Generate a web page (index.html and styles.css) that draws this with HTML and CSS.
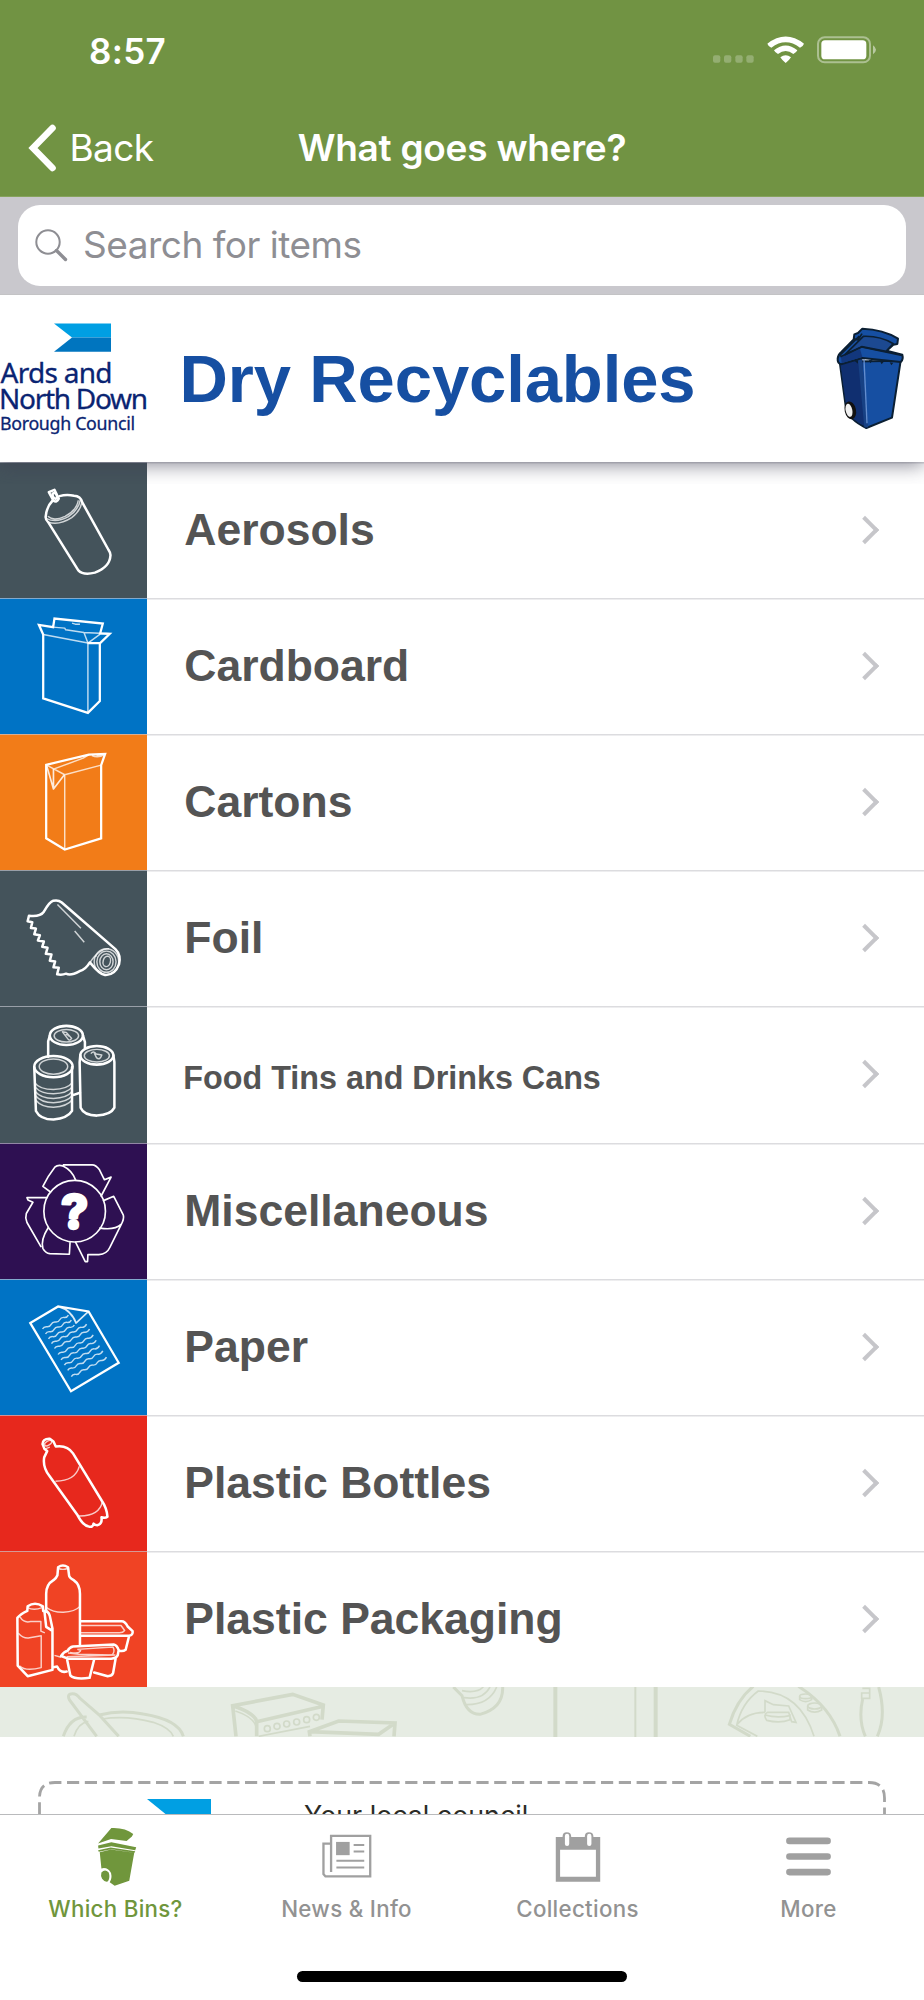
FILE: index.html
```html
<!DOCTYPE html>
<html lang="en">
<head>
<meta charset="utf-8">
<title>What goes where?</title>
<link rel="stylesheet" href="styles.css">
</head>
<body>
<div class="screen">
  <header class="top">
    <div class="status">
      <span class="time">8:57</span>
      <svg class="status-icons" width="164" height="28" viewBox="0 0 492 84">
        <g fill="#fff" fill-opacity=".25"><rect x="0" y="58" width="22" height="22" rx="6"/><rect x="33" y="58" width="22" height="22" rx="6"/><rect x="67" y="58" width="22" height="22" rx="6"/><rect x="100" y="58" width="22" height="22" rx="6"/></g>
        <path fill="#fff" d="M163 23Q218-20 273 23Q271 30 261 35Q218 3 175 35Q165 30 163 23ZM183 43Q218 14 253 43Q250 50 241 54Q218 36 195 54Q186 50 183 43ZM202 64Q218 51 234 64Q228 74 218 81Q208 74 202 64Z"/>
        <rect x="315" y="4" width="156" height="75" rx="20" fill="none" stroke="#fff" stroke-opacity=".42" stroke-width="6"/>
        <rect x="325" y="13" width="135" height="57" rx="11" fill="#fff"/>
        <path d="M480 28Q498 41 480 55Z" fill="#fff" fill-opacity=".5"/>
      </svg>
    </div>
    <nav class="nav">
      <svg class="nav-arrow" width="30" height="50" viewBox="0 0 30 50"><path d="M25.5 5L6 25L25.5 45" fill="none" stroke="#fff" stroke-width="6.6" stroke-linecap="round" stroke-linejoin="miter"/></svg>
      <span class="back">Back</span>
      <h1 class="title">What goes where?</h1>
    </nav>
  </header>

  <div class="searchbar">
    <div class="field">
      <svg width="34" height="34" viewBox="0 0 34 34" fill="none" stroke="#8e8e93"><circle cx="14" cy="14" r="11.7" stroke-width="2"/><path d="M22.5 22.5L31.5 31.5" stroke-width="3.4" stroke-linecap="round"/></svg>
      <span class="placeholder">Search for items</span>
    </div>
  </div>

  <section class="category">
    <svg class="council" width="148" height="167" viewBox="0 295 148 167">
      <path d="M54 323.5H111V337.5H72Z" fill="#009fe3"/><path d="M72 337.5H111V351.7H54Z" fill="#0075bf"/>
      <g class="council-name"><text x="0.5" y="382.7" font-size="28" textLength="112">Ards and</text><text x="-1" y="409" font-size="28" textLength="149">North Down</text><text x="0" y="429.5" font-size="17.8" textLength="135">Borough Council</text></g>
    </svg>
    <h2 class="category-title">Dry Recyclables</h2>
    <svg class="bin" width="70" height="106" viewBox="405 78 210 318" stroke-linejoin="round">
      <path d="M419 185L438 325Q446 358 499 384L576 353L602 182Z" fill="#164fa2" stroke="#0b1f33" stroke-width="6"/>
      <path d="M421 190L487 176L499 381Q451 359 440 328Z" fill="#102f70"/>
      <path d="M480 178L499 382" stroke="#174184" stroke-width="12"/>
      <path d="M492 178L501 370" stroke="#638dce" stroke-width="4"/>
      <path d="M413 176Q414 164 424 156L461 118L463 103L474 99L487 86Q550 88 594 116L592 132L580 134L560 152L607 164Q611 178 602 186L487 174L423 193Q412 190 413 176Z" fill="#164fa2" stroke="#0b1f33" stroke-width="6"/>
      <path d="M423 170L480 147L487 171L425 190Z" fill="#12377d"/>
      <path d="M490 109Q540 107 580 131L558 154L485 140L435 164Z" fill="#1c4991" stroke="#0b1f33" stroke-width="5"/>
      <path d="M421 170L485 141L606 166M461 116L474 120L486 101M419 166L478 108" fill="none" stroke="#0b1f33" stroke-width="5"/>
      <path d="M464 183l10 8v-10zM507 180l4 10 7-9zM540 184l5 9 6-8zM569 187l5 9 6-8z" fill="#0b1f33"/>
      <ellipse cx="451" cy="331" rx="17" ry="27" transform="rotate(-12 451 331)" fill="#111"/><ellipse cx="447" cy="331" rx="10" ry="20" transform="rotate(-12 447 331)" fill="#f0f0f0"/>
    </svg>
  </section>

  <ul class="list">
    <li class="row"><div class="tile slate">
      <svg viewBox="0 486 441 408"><g class="ln"><path d="M146 574L163 567L176 594Q170 606 160 600Z"/><ellipse cx="164" cy="585" rx="6" ry="9" transform="rotate(-25 164 585)"/><path d="M157 600Q140 617 137 645Q134 656 145 666L235 810Q250 826 285 817Q330 800 332 766Q333 758 326 748L247 605Q242 586 222 585Q200 580 178 586"/></g><g class="th"><path d="M143 647Q160 663 195 647Q230 629 235 599M139 654Q169 668 205 648Q236 628 241 598M145 665Q178 675 215 651Q240 632 245 607"/></g></svg>
    </div><span class="label">Aerosols</span><i class="chev"></i></li>
    <li class="row"><div class="tile blue">
      <svg viewBox="0 23 441 408"><g class="ln miter"><path d="M129 130L116 101L159 108L163 82L309 97L301 127L330 128L301 156L265 156M129 130V323L264 367L300 331V156"/></g><g class="th"><path d="M129 130L264 156V366M159 108L194 111L197 116L252 124L330 128M252 124L264 156L301 129M216 96L226 99H240"/></g></svg>
    </div><span class="label">Cardboard</span><i class="chev"></i></li>
    <li class="row"><div class="tile orange">
      <svg viewBox="0 432 441 408"><g class="ln miter"><path d="M138 522L267 491L316 489L304 523V744L194 778L138 744Z"/></g><g class="th"><path d="M138 522L194 552L304 523M194 552V778M160 535L250 502L267 491M276 494Q295 502 314 491M290 493H308"/><path class="mid" d="M140 526L160 595L193 552M160 535V592"/></g></svg>
    </div><span class="label">Cartons</span><i class="chev"></i></li>
    <li class="row"><div class="tile slate">
      <svg viewBox="0 2 441 408"><g class="ln"><path d="M86 137Q120 141 131 125Q148 95 159 92Q174 88 185 97L347 238Q365 256 358 284Q345 318 315 316Q300 315 270 278Q257 300 238 305Q212 319 198 312Q186 317 171 314L176 294L160 293L165 275L149 273L154 254L137 252L142 234L126 231L131 215L113 212L119 196L102 193L107 176L92 174L96 157L82 154Z"/></g><g class="th"><path d="M172 103L243 175M224 183L253 217M270 278Q300 235 328 237M271 278Q281 260 291 257"/><ellipse cx="320" cy="276" rx="37" ry="39"/><ellipse cx="320" cy="276" rx="29" ry="32"/><ellipse cx="320" cy="276" rx="20" ry="24"/><ellipse cx="321" cy="275" rx="11" ry="16" transform="rotate(15 321 275)"/></g></svg>
    </div><span class="label">Foil</span><i class="chev"></i></li>
    <li class="row"><div class="tile slate">
      <svg viewBox="0 410 441 408"><g class="ln"><ellipse cx="199" cy="496" rx="50" ry="29"/><path d="M149 496L144 514V560M249 496L255 516V534"/><ellipse cx="291" cy="556" rx="50" ry="28"/><path d="M241 556L239 577L242 714Q252 737 291 738Q333 736 344 714V577L341 556"/><ellipse cx="160" cy="590" rx="58" ry="32"/><path d="M102 592L107 724Q120 750 160 750Q203 746 216 724V592M217 677L240 669"/></g><g class="th"><ellipse cx="199" cy="497" rx="37" ry="19"/><ellipse cx="291" cy="557" rx="38" ry="19"/><ellipse cx="160" cy="590" rx="43" ry="23"/><path d="M187 485L204 507Q209 514 215 505L199 487ZM196 496Q202 489 206 499M273 551Q281 540 289 552L306 555Q300 572 290 563L283 549M104 639Q118 659 160 659Q202 658 216 639M105 652Q122 672 160 672Q202 671 216 652M105 665Q122 686 160 686Q202 684 216 665M106 678Q123 699 160 699Q202 697 216 678M106 691Q124 713 160 713Q202 710 216 691"/></g></svg>
    </div><span class="label small">Food Tins and Drinks Cans</span><i class="chev"></i></li>
    <li class="row"><div class="tile purple">
      <svg viewBox="0 8 441 408"><g class="ln rec"><circle cx="224" cy="211" r="93"/><path d="M151 153L128 136Q144 103 164 78Q174 69 190 75Q216 87 227 117M190 71H277Q288 71 299 86L314 116L334 108L304 165M311 179L342 166L371 223Q374 234 364 252L331 319Q321 341 297 342H264L263 363H256L227 305M300 262Q345 269 364 251M140 170H80L83 177L98 184L78 218Q74 231 80 245L122 318M144 261Q121 297 128 323Q136 338 149 339L208 341L210 306"/></g><text x="224" y="264" text-anchor="middle" class="question">?</text></svg>
    </div><span class="label">Miscellaneous</span><i class="chev"></i></li>
    <li class="row"><div class="tile blue">
      <svg viewBox="0 416 441 408"><g class="ln miter"><path d="M90 546L174 496L266 511L357 666L213 752Z"/></g><g class="th"><path class="mid" d="M174 496Q213 507 228 546L266 511M228 546Q222 522 192 500"/><path d="M127 564q4-8 13-7t13-7t13-7t13-7t13-7t13-7M136 579q4-8 13-7t13-7t13-7t13-7t13-7t13-7M145 594q4-8 13-7t13-7t13-7t13-7t13-7t13-7M154 608q4-8 13-7t13-7t13-7t13-7t13-7t13-7t13-7t15-10M163 623q4-8 13-7t13-7t13-7t13-7t13-7t13-7t13-7t15-10M174 641q4-8 13-7t13-7t13-7t13-7t13-7t13-7t13-7t15-10M183 657q4-8 13-7t13-7t13-7t13-7t13-7t13-7t13-7t15-10M193 673q4-8 13-7t13-7t13-7t13-7t13-7t13-7t13-7t15-10M203 689q4-8 13-7t13-7t13-7t13-7t13-7t13-7t13-7t15-10M214 708q4-8 13-7t13-7t13-7t13-7t13-7t13-7t13-7t15-10"/></g></svg>
    </div><span class="label">Paper</span><i class="chev"></i></li>
    <li class="row"><div class="tile red">
      <svg viewBox="0 14 441 408"><g class="ln"><path d="M133 114L127 99Q128 82 149 83L160 91L167 106Q202 101 219 127L306 270Q321 292 323 318Q317 323 305 320Q308 340 292 344Q286 344 281 339Q279 351 267 348Q249 345 233 314L148 195Q127 169 132 139L141 120Z"/></g><g class="th"><ellipse cx="144" cy="96" rx="12" ry="6" transform="rotate(-30 144 96)"/><path d="M166 211Q226 210 238 166M237 316Q299 317 308 272M133 114L149 108"/></g></svg>
    </div><span class="label">Plastic Bottles</span><i class="chev"></i></li>
    <li class="row"><div class="tile coral">
      <svg viewBox="0 424 441 408"><g class="ln"><path d="M174 470Q188 460 204 470L207 494Q207 501 221 509Q240 522 240 550V705M174 470L172 494Q169 502 160 509Q138 522 138 550V603"/><path d="M82 588Q104 573 128 588L129 602Q144 600 149 617L157 655V780L82 799L52 767L51 623Q60 612 81 602ZM133 605L138 650L157 662"/><path d="M241 633H366Q376 633 384 649L399 663Q401 675 388 677H242M388 679L378 719Q370 725 359 722M160 772L171 770Q180 790 200 785"/><path d="M183 738Q191 725 203 722Q208 711 219 709L342 703Q352 705 357 720L354 736Q350 745 334 746H204ZM201 748L211 797Q225 810 269 804L283 748M283 788L324 799Q337 799 340 790L348 744"/></g><g class="th"><path d="M174 473Q188 480 204 473M138 591Q160 607 190 606Q226 604 239 589M59 620Q70 639 91 634H122V663L134 668M54 669Q70 687 88 683L123 677V773Q75 785 58 768M82 592Q100 602 126 592M242 646H364L375 661Q370 668 359 668H242M163 736L183 742M232 718L340 711Q347 724 337 735L237 733L204 729M232 718L242 721Q240 732 210 727M200 740L347 735"/></g></svg>
    </div><span class="label">Plastic Packaging</span><i class="chev"></i></li>
  </ul>

  <svg class="pattern" width="924" height="50" viewBox="0 22 2772 150" fill="none" stroke="#d2dac9" stroke-width="9">
    <path d="M290 170L208 60Q200 42 218 42Q230 42 240 56L298 106L356 170M190 170Q210 110 260 112M298 106Q360 90 430 103Q535 120 550 170"/><path stroke-width="5" d="M222 170Q234 130 265 125M306 118Q380 106 460 128Q510 145 520 170"/>
    <path stroke-width="11" d="M708 170L698 78L878 44L970 76L966 120M698 78Q765 100 770 126V170M770 126L970 80M930 170L928 156L1016 124L1185 130L1182 170M928 156L1136 164L1185 130"/><path stroke-width="5" d="M706 94Q760 112 768 140M776 170L930 140"/>
    <g stroke-width="5"><circle cx="802" cy="147" r="9"/><circle cx="831" cy="140" r="9"/><circle cx="860" cy="133" r="9"/><circle cx="890" cy="127" r="9"/><circle cx="920" cy="120" r="9"/><circle cx="949" cy="113" r="9"/></g>
    <path d="M1360 22L1386 48Q1400 105 1440 104Q1510 85 1508 22"/><path stroke-width="5" d="M1386 33Q1430 42 1450 22M1392 54Q1450 62 1470 22M1398 75Q1468 76 1490 22"/>
    <path stroke-width="12" d="M1666 22V172M1967 22V172"/><path stroke-width="6" d="M1906 22V172"/>
    <path d="M2251 170L2188 134Q2210 60 2260 20M2395 20Q2490 80 2520 170"/><path stroke-width="5" d="M2272 170L2210 137Q2225 70 2275 34Q2400 35 2442 170M2212 134Q2240 98 2295 98M2295 98V63L2320 75L2366 79L2388 128L2375 126L2366 98H2303Q2288 105 2300 122Q2340 132 2370 120V104M2295 106Q2330 116 2370 108"/>
    <g stroke-width="5"><ellipse cx="2417" cy="50" rx="18" ry="7"/><path d="M2399 50V60Q2417 72 2435 60V50"/><ellipse cx="2444" cy="79" rx="21" ry="9"/><path d="M2423 79V91Q2444 104 2465 91V79"/><path d="M2587 26H2609V56H2585V40H2609"/></g>
    <path d="M2588 58Q2574 120 2596 170M2636 22Q2660 110 2632 170"/>
  </svg>

  <section class="promo">
    <svg class="dashes" width="848" height="60" viewBox="0 0 848 60"><path d="M1.5 60V17Q1.5 1.5 17 1.5H831Q846.5 1.5 846.5 17V60" fill="none" stroke="#a4a4a4" stroke-width="2.8" stroke-dasharray="12.2 5.6" stroke-dashoffset="9"/></svg>
    <div class="promo-body">
      <svg class="promo-flag" width="64" height="30" viewBox="0 0 64 30"><path d="M0 0H64V30H37Z" fill="#009fe3"/></svg>
      <span class="promo-text">Your local council</span>
    </div>
  </section>

  <footer class="tabs">
    <a class="tab active">
      <svg viewBox="258 435 180 190" width="60" height="63"><path fill="#70963c" d="M294 491L334 444Q376 442 400 462L396 470L380 483L333 477ZM294 497L334 487L409 502L406 511L334 499L295 506ZM294 511L332 503L406 514L404 519L334 508L296 516ZM299 517L333 509L403 519L388 603L344 618L329 608Q337 596 333 580Q323 561 304 566ZM304 578Q315 566 326 578Q331 593 324 605Q315 609 306 597Q301 588 304 578Z"/></svg>
      <span>Which Bins?</span>
    </a>
    <a class="tab">
      <svg viewBox="950 435 180 190" width="60" height="63" fill="none" stroke="#a0a0a0"><path stroke-width="7" d="M992 577V468H1110V590H975L969 583V491H990"/><path stroke-width="6" d="M1008 543H1092M1008 563H1092M1060 495H1092M1060 515H1092"/><path d="M1007 486H1048V526H1007Z" fill="#a0a0a0" stroke="none"/></svg>
      <span>News &amp; Info</span>
    </a>
    <a class="tab">
      <svg viewBox="258 435 180 190" width="60" height="63"><path fill="#a0a0a0" fill-rule="evenodd" d="M281 471H415V606H281ZM294 510V591H402V510Z"/><path d="M304 492V470Q304 459 314 459Q325 459 325 470V492M371 492V470Q371 459 381 459Q392 459 392 470V492" fill="#a0a0a0" stroke="#a0a0a0" stroke-width="5"/><path d="M315 468V492M382 468V492" stroke="#fff" stroke-width="13" stroke-linecap="round"/></svg>
      <span>Collections</span>
    </a>
    <a class="tab">
      <svg viewBox="949 435 180 190" width="60" height="63"><path d="M980 483H1095M980 530H1095M980 577H1095" stroke="#a0a0a0" stroke-width="20" stroke-linecap="round"/></svg>
      <span>More</span>
    </a>
    <div class="home"></div>
  </footer>
</div>
</body>
</html>
```

FILE: styles.css
```css
* { box-sizing: border-box; }
body { margin: 0; background: #fff; font-family: Inter, "Liberation Sans", sans-serif; }
.screen { width: 924px; height: 2000px; overflow: hidden; display: flex; flex-direction: column; background: #fff; }
.screen svg { display: block; flex: none; }

.top { height: 197px; flex: none; background: #719343; color: #fff; border-bottom: 1px solid #86a35d; }
.status { height: 100px; display: flex; justify-content: space-between; padding: 0 47px 0 89px; }
.time { font-size: 35px; font-weight: 600; line-height: 42px; padding-top: 30px; letter-spacing: .3px; }
.status-icons { margin-top: 36px; }
.nav { height: 96px; display: grid; grid-template-columns: 30px 200px 1fr 257px; align-items: center; padding: 0 0 0 27px; }
.nav-arrow { margin-bottom: 1px; }
.nav .back { font-size: 37px; line-height: 46px; padding-left: 12.5px; letter-spacing: -.6px; }
.title { margin: 0; font-size: 37px; line-height: 46px; font-weight: 600; letter-spacing: -.25px; text-align: center; white-space: nowrap; }

.searchbar { height: 98px; flex: none; background: #c9c8cd; padding: 8px 18px 9px; border-bottom: 1px solid #c3c3c5; }
.field { height: 80.5px; border-radius: 22px; background: #fff; display: flex; align-items: center; padding-left: 16px; gap: 14px; }
.field svg { margin-bottom: 1px; }
.placeholder { font-size: 37px; line-height: 46px; color: #8e8e93; letter-spacing: -.5px; padding: 0 0 1px 1px; }

.category { height: 167px; flex: none; display: flex; background: #fff; position: relative; box-shadow: 0 3px 18px 0 rgba(60,60,80,.6); clip-path: inset(0 0 -22px 0); z-index: 1; }
.council-name { font-family: "Noto Sans", sans-serif; fill: #0a2472; stroke: #0a2472; stroke-width: .3px; }
.category-title { margin: 0; padding-left: 31.5px; font: bold 67px/76px "Liberation Sans", sans-serif; letter-spacing: -.12px; color: #164fa2; padding-top: 46px; width: 687px; white-space: nowrap; }
.bin { margin-top: 31px; }

.list { list-style: none; margin: 0; padding: 0; height: 1225px; flex: none; display: grid; grid-template-rows: repeat(9, minmax(0, 1fr)); }
.row { display: flex; align-items: center; min-height: 0; background: linear-gradient(#dcdcdf, #dcdcdf) top / 100% 1.5px no-repeat; }
.tile { width: 147.3px; height: 100%; flex: none; border-top: 1px solid rgba(200,200,210,.65); }
.tile svg { width: 147px; height: 100%; }
.slate { background: #44535b; }
.blue { background: #0073c5; }
.orange { background: #f27c18; }
.purple { background: #2e1052; }
.red { background: #e7281d; }
.coral { background: #f04324; }
.ln { fill: none; stroke: #fff; stroke-width: 7.6; stroke-linejoin: round; stroke-linecap: round; }
.miter { stroke-linejoin: miter; stroke-width: 6.8; }
.rec { stroke-width: 5; }
.th { fill: none; stroke: #fff; stroke-opacity: .75; stroke-width: 4.4; stroke-linejoin: round; }
.mid { stroke-width: 5; stroke-opacity: .85; }
.question { font: 800 144px Inter, sans-serif; fill: #fff; stroke: #fff; stroke-width: 7; stroke-linejoin: round; }
.label { flex: 1; padding-left: 37px; font: bold 44.5px/52px "Liberation Sans", sans-serif; color: #545454; white-space: nowrap; }
.small { font-size: 32.3px; padding-top: 8px; padding-left: 36px; }
.chev { width: 20px; height: 20px; border: solid #c6c6ca; border-width: 4px 4px 0 0; transform: rotate(45deg); margin-right: 49.5px; }

.pattern { background: #e6ece3; }
.promo { flex: none; height: 77px; padding: 44px 38px 0; overflow: hidden; display: grid; }
.dashes, .promo-body { grid-area: 1 / 1; }
.promo-body { display: flex; padding: 18px 0 0 109px; }
.promo-text { padding-left: 93px; font-size: 26.8px; line-height: 32px; color: #2b2b26; }

.tabs { flex: none; height: 186px; border-top: 1px solid #b9babc; background: #fff; display: grid; grid-template-columns: repeat(4, 1fr); grid-template-rows: 156px auto; }
.tab { display: flex; flex-direction: column; align-items: center; padding-top: 10px; color: #929292; font-size: 22.3px; font-weight: 500; letter-spacing: .3px; line-height: 28px; }
.tab span { margin-top: 7px; }
.active { color: #70963c; }
.home { grid-column: 1 / -1; justify-self: center; width: 330px; height: 11px; border-radius: 6px; background: #000; }
```
